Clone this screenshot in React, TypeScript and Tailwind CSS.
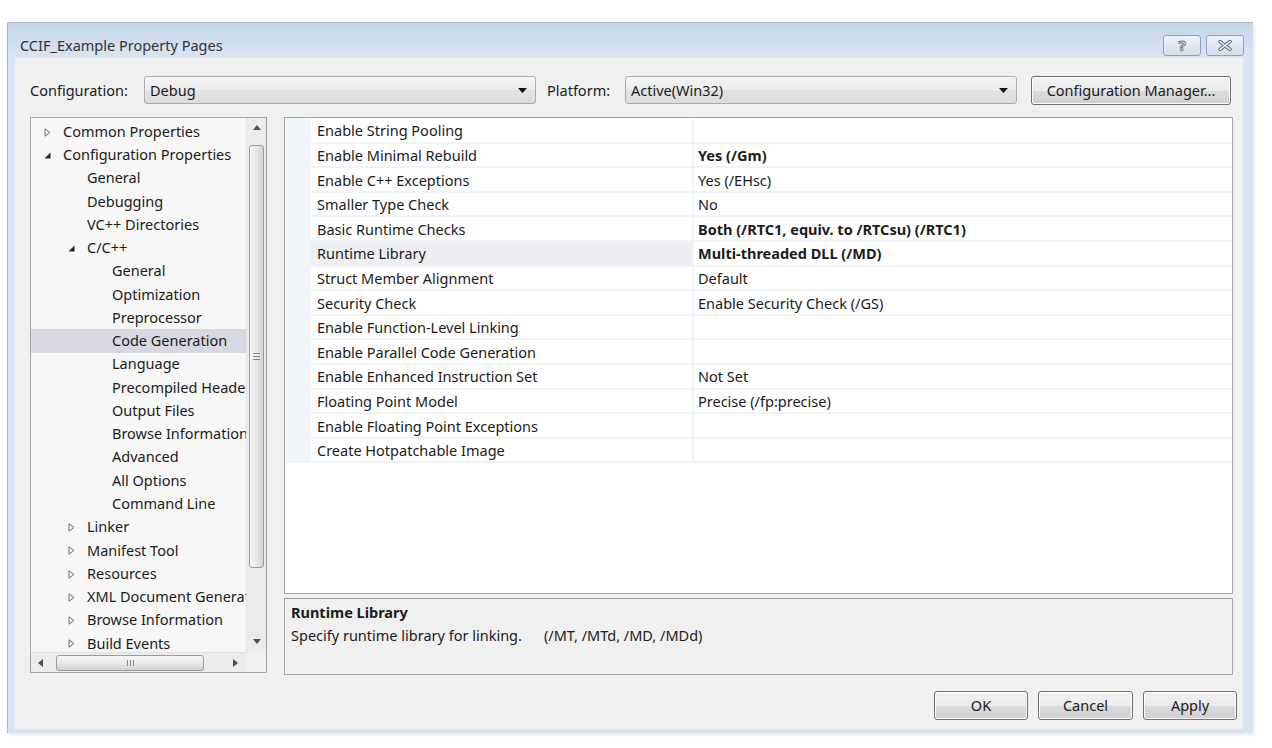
import React from "react";

type TreeItem = {
  label: string;
  level: 0 | 1 | 2;
  toggle?: "open" | "closed";
  selected?: boolean;
};

const TREE: TreeItem[] = [
  { label: "Common Properties", level: 0, toggle: "closed" },
  { label: "Configuration Properties", level: 0, toggle: "open" },
  { label: "General", level: 1 },
  { label: "Debugging", level: 1 },
  { label: "VC++ Directories", level: 1 },
  { label: "C/C++", level: 1, toggle: "open" },
  { label: "General", level: 2 },
  { label: "Optimization", level: 2 },
  { label: "Preprocessor", level: 2 },
  { label: "Code Generation", level: 2, selected: true },
  { label: "Language", level: 2 },
  { label: "Precompiled Headers", level: 2 },
  { label: "Output Files", level: 2 },
  { label: "Browse Information", level: 2 },
  { label: "Advanced", level: 2 },
  { label: "All Options", level: 2 },
  { label: "Command Line", level: 2 },
  { label: "Linker", level: 1, toggle: "closed" },
  { label: "Manifest Tool", level: 1, toggle: "closed" },
  { label: "Resources", level: 1, toggle: "closed" },
  { label: "XML Document Generator", level: 1, toggle: "closed" },
  { label: "Browse Information", level: 1, toggle: "closed" },
  { label: "Build Events", level: 1, toggle: "closed" },
];

const INDENT = ["pl-[13px]", "pl-[37px]", "pl-[62px]"];

type Prop = { name: string; value?: string; bold?: boolean; selected?: boolean };

const PROPS: Prop[] = [
  { name: "Enable String Pooling" },
  { name: "Enable Minimal Rebuild", value: "Yes (/Gm)", bold: true },
  { name: "Enable C++ Exceptions", value: "Yes (/EHsc)" },
  { name: "Smaller Type Check", value: "No" },
  { name: "Basic Runtime Checks", value: "Both (/RTC1, equiv. to /RTCsu) (/RTC1)", bold: true },
  { name: "Runtime Library", value: "Multi-threaded DLL (/MD)", bold: true, selected: true },
  { name: "Struct Member Alignment", value: "Default" },
  { name: "Security Check", value: "Enable Security Check (/GS)" },
  { name: "Enable Function-Level Linking" },
  { name: "Enable Parallel Code Generation" },
  { name: "Enable Enhanced Instruction Set", value: "Not Set" },
  { name: "Floating Point Model", value: "Precise (/fp:precise)" },
  { name: "Enable Floating Point Exceptions" },
  { name: "Create Hotpatchable Image" },
];

const BTN =
  "border border-[#707070] rounded-[3px] bg-[linear-gradient(#f2f2f2,#ebebeb_50%,#dddddd_50%,#cfcfcf)] shadow-[inset_0_0_0_1px_#fcfcfc] flex items-center justify-center";

function Toggle({ kind }: { kind: "open" | "closed" }) {
  if (kind === "open") {
    return (
      <svg width="7" height="7" viewBox="0 0 7 7" className="mt-[1px]">
        <polygon points="6.5,0.5 6.5,6.5 0.5,6.5" fill="#262626" />
      </svg>
    );
  }
  return (
    <svg width="7" height="9" viewBox="0 0 7 9" className="mt-[1px]">
      <polygon points="1,0.8 6,4.5 1,8.2" fill="none" stroke="#6e6e6e" strokeWidth="1" />
    </svg>
  );
}

function Combo({ value, width }: { value: string; width: string }) {
  return (
    <div
      className={`${width} h-[28px] border border-[#acacac] rounded-[3px] bg-[linear-gradient(#f5f5f5,#ececec_50%,#e3e3e3_50%,#dcdcdc)] flex items-center pl-[5px] pr-[8px]`}
    >
      <span className="flex-1 pt-[1px]">{value}</span>
      <svg width="9" height="5" viewBox="0 0 9 5">
        <polygon points="0,0 9,0 4.5,5" fill="#111" />
      </svg>
    </div>
  );
}

function Arrow({ dir }: { dir: "up" | "down" | "left" | "right" }) {
  const pts = {
    up: "0,5 8,5 4,0",
    down: "0,0 8,0 4,5",
    left: "5,0 5,8 0,4",
    right: "0,0 0,8 5,4",
  }[dir];
  const vertical = dir === "up" || dir === "down";
  return (
    <svg width={vertical ? 8 : 5} height={vertical ? 5 : 8} viewBox={vertical ? "0 0 8 5" : "0 0 5 8"}>
      <polygon points={pts} fill="#505050" />
    </svg>
  );
}

function TreePanel() {
  return (
    <div className="w-[237px] h-[556px] border border-[#a5a5a5] bg-[#f7f7f7] flex flex-col">
      <div className="flex-1 flex min-h-0">
        <div className="flex-1 min-w-0 overflow-hidden pt-[2px]">
          {TREE.map((item, i) => (
            <div
              key={i}
              className={`h-[23.27px] flex items-center whitespace-nowrap ${INDENT[item.level]} ${
                item.selected ? "bg-[#d8d8e2]" : ""
              }`}
            >
              <span className="w-[19px] shrink-0 flex items-center">
                {item.toggle && <Toggle kind={item.toggle} />}
              </span>
              <span>{item.label}</span>
            </div>
          ))}
        </div>
        {/* vertical scrollbar */}
        <div className="w-[20px] bg-[#ececec] flex flex-col items-center border-l border-[#e2e2e2]">
          <div className="h-[19px] w-full flex items-center justify-center">
            <Arrow dir="up" />
          </div>
          <div className="flex-1 w-full px-[2px] pt-[8px]">
            <div className="h-[423px] rounded-[3px] border border-[#9b9b9b] bg-[linear-gradient(90deg,#f6f6f6,#e6e6e6_55%,#d2d2d2)] flex items-center justify-center">
              <div className="flex flex-col gap-[2px]">
                <div className="w-[7px] h-[1px] bg-[#8a8a8a]" />
                <div className="w-[7px] h-[1px] bg-[#8a8a8a]" />
                <div className="w-[7px] h-[1px] bg-[#8a8a8a]" />
              </div>
            </div>
          </div>
          <div className="h-[22px] w-full flex items-center justify-center">
            <Arrow dir="down" />
          </div>
        </div>
      </div>
      {/* horizontal scrollbar */}
      <div className="h-[20px] flex">
        <div className="flex-1 bg-[#ececec] flex items-center border-t border-[#e2e2e2]">
          <div className="w-[19px] flex justify-center">
            <Arrow dir="left" />
          </div>
          <div className="ml-[6px] w-[148px] h-[16px] rounded-[3px] border border-[#9b9b9b] bg-[linear-gradient(#f6f6f6,#e6e6e6_55%,#d2d2d2)] flex items-center justify-center gap-[2px]">
            <div className="w-[1px] h-[6px] bg-[#8a8a8a]" />
            <div className="w-[1px] h-[6px] bg-[#8a8a8a]" />
            <div className="w-[1px] h-[6px] bg-[#8a8a8a]" />
          </div>
          <div className="flex-1 flex justify-end pr-[8px]">
            <Arrow dir="right" />
          </div>
        </div>
        <div className="w-[20px] bg-[#f0f0f0]" />
      </div>
    </div>
  );
}

function PropertyGrid() {
  return (
    <div className="h-[477px] border border-[#a5a5a5] bg-white">
      <div className="flex flex-col pt-[1px] bg-[#f2f5fa]">
        {PROPS.map((p) => (
          <div key={p.name} className="h-[24.6px] flex">
            <div className="w-[26px] shrink-0" />
            <div
              className={`w-[381px] shrink-0 flex items-center pl-[6px] pt-[2px] border-b-2 border-[#f0f3f8] ${
                p.selected ? "bg-[#efeff3]" : "bg-white"
              }`}
            >
              {p.name}
            </div>
            <div className="w-[2px] bg-[#f0f3f8]" />
            <div
              className={`flex-1 flex items-center pl-[4px] pt-[2px] bg-white border-b-2 border-[#f0f3f8] ${
                p.bold ? "font-bold" : ""
              }`}
            >
              {p.value}
            </div>
          </div>
        ))}
      </div>
    </div>
  );
}

export default function App() {
  return (
    <div className="w-[1272px] h-[748px] bg-white overflow-hidden pt-[22px] pl-[7px] font-['Noto_Sans',sans-serif] text-[14.5px] text-[#1b1b1b]">
      <div className="w-[1246px] h-[711px] flex flex-col bg-[#d9e5f2] border-l border-t border-[#a7b7c9] rounded-tl-[2px] shadow-[2px_2px_3px_rgba(0,0,0,0.08)]">
        {/* title bar */}
        <div className="h-[35px] flex items-start bg-linear-to-b from-[#c5d6ea] to-[#d9e5f2] pl-[12px] pr-[9px]">
          <div className="flex-1 pt-[12px] text-[14.5px] text-[#333]">CCIF_Example Property Pages</div>
          <div className="flex gap-[5px] pt-[12px]">
            <div className="w-[38px] h-[21px] rounded-[3px] border border-[#8fa2b8] bg-linear-to-b from-[#eef3f9] to-[#d3dfec] flex items-center justify-center">
              <span className="font-bold text-[15px] leading-none text-white [-webkit-text-stroke:1px_#65758a]">?</span>
            </div>
            <div className="w-[38px] h-[21px] rounded-[3px] border border-[#8fa2b8] bg-linear-to-b from-[#eef3f9] to-[#d3dfec] flex items-center justify-center">
              <svg width="14" height="11" viewBox="0 0 14 11">
                <path d="M2 1.5 L12 9.5 M12 1.5 L2 9.5" stroke="#65758a" strokeWidth="3.6" strokeLinecap="round" />
                <path d="M2 1.5 L12 9.5 M12 1.5 L2 9.5" stroke="#f4f7fb" strokeWidth="1.6" strokeLinecap="round" />
              </svg>
            </div>
          </div>
        </div>

        {/* client area */}
        <div className="ml-[7px] w-[1228px] h-[671px] bg-[#f0f0f0] pl-[15px] pt-[18px]">
          <div className="flex items-center h-[28px]">
            <span className="w-[114px] pt-[1px]">Configuration:</span>
            <Combo value="Debug" width="w-[392px]" />
            <span className="ml-[11px] w-[78px] pt-[1px]">Platform:</span>
            <Combo value="Active(Win32)" width="w-[392px]" />
            <div className={`${BTN} ml-[14px] w-[200px] h-[29px] pt-[1px]`}>Configuration Manager...</div>
          </div>

          <div className="flex mt-[13px]">
            <TreePanel />
            <div className="ml-[17px] w-[949px] flex flex-col gap-[4px]">
              <PropertyGrid />
              <div className="h-[77px] border border-[#a5a5a5] bg-[#f0f0f0] pl-[6px] pt-[2px]">
                <div className="font-bold leading-[23px]">Runtime Library</div>
                <div className="leading-[23px] whitespace-pre">
                  Specify runtime library for linking.<span className="ml-[22px]">(/MT, /MTd, /MD, /MDd)</span>
                </div>
              </div>
            </div>
          </div>

          <div className="flex justify-end gap-[10px] mt-[16px] pr-[6px]">
            <div className={`${BTN} w-[94px] h-[29px]`}>OK</div>
            <div className={`${BTN} w-[95px] h-[29px]`}>Cancel</div>
            <div className={`${BTN} w-[94px] h-[29px]`}>Apply</div>
          </div>
        </div>
      </div>
    </div>
  );
}
